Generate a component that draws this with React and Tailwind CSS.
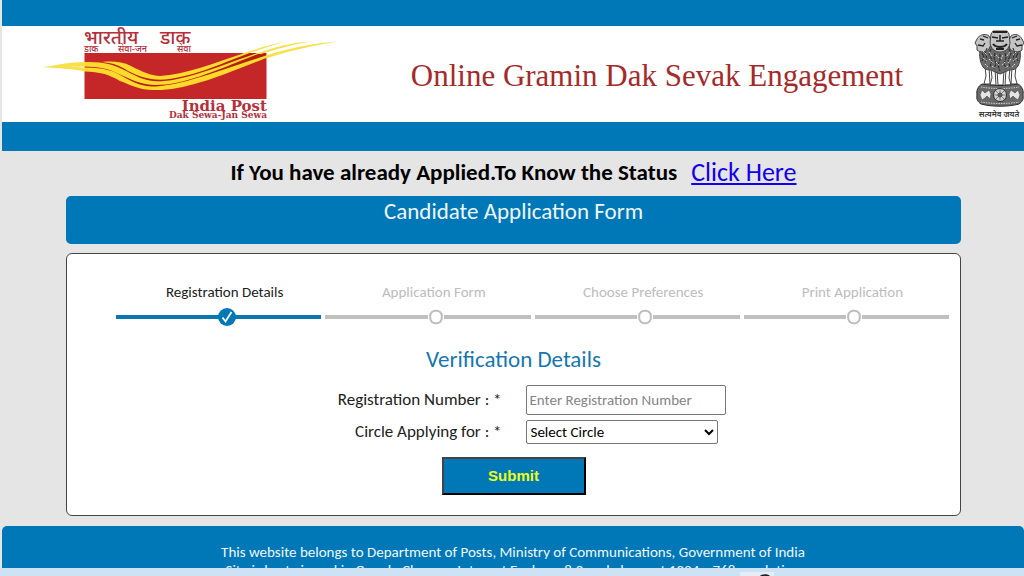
import React from "react";

const steps = [
  { label: "Registration Details", active: true },
  { label: "Application Form", active: false },
  { label: "Choose Preferences", active: false },
  { label: "Print Application", active: false },
];

function PostLogo() {
  return (
    <svg
      viewBox="40 26 300 96"
      className="h-24 w-[300px] shrink-0"
      role="img"
      aria-label="India Post"
    >
      <rect x="84.5" y="53" width="182" height="46" fill="#c52729" />
      <path
        d="M117 63C134 66 140 76 160 78C190 79 220 62 250 53H266V57C240 66 215 78 185 83C168 87 150 89 137 84C122 77 112 66 85 66V65Z"
        fill="#b3200f"
      />
      <g fill="#ffd92b">
        <path d="M102 62C112 61 122 61.500 131 66C143 72 150 75.500 160 76C185 75 214 63 247 52.300V54C220 64 190 78.500 160 79.800C148 79.500 138 76 128 71C120 65.500 112 63 102 62Z" />
        <path d="M84.500 62C104 61.500 113 64.500 122 69C134 74.500 142 80.500 156 81.300C182 81.500 210 69.500 258 52.800H261C214 71.500 184 85 156 85C141 84.500 132 80 121 75C108 68 98 67 84.500 66.500Z" />
        <path d="M84.500 67.500C104 67.500 114 71 122 76C136 84 142 86.500 156 86.500C184 84.500 214 72.500 266 55.500V58C218 77 186 90 156 90C140 90.500 132 85.500 120 81C108 74 100 72 84.500 71.500Z" />
      </g>
      <g fill="#f8e04a">
        <path d="M43 67C58 65 70 62 85 62V66.500C78 67 72 66.500 67 67C72 67 78 67 85 67.500V71.500C72 68.500 58 68.500 43 67Z" />
        <path d="M242 54C256 49 268 45 284 42C270 46 258 50 247 54Z" />
        <path d="M256 54C272 48 288 43 312 41C292 45 276 49 261 54Z" />
        <path d="M266 55.500C290 48 310 44 338 41.300C312 46 292 50 266 58.500Z" />
      </g>
      <g fill="#b5303a" fontWeight="500" fontFamily="'Noto Sans Devanagari','Noto Sans','Lohit Devanagari',sans-serif">
        <text fontSize="19">
          <tspan x="84" y="44">भारतीय </tspan>
          <tspan x="160" y="44">डाक</tspan>
        </text>
        <text fontSize="9">
          <tspan x="84" y="52">डाक </tspan>
          <tspan x="118" y="52">सेवा-जन </tspan>
          <tspan x="177" y="52">सेवा</tspan>
        </text>
      </g>
      <g fill="#b5303a" fontWeight="700" textAnchor="end" fontFamily="'DejaVu Serif',serif">
        <text x="267" y="111" fontSize="15">India Post</text>
        <text x="267" y="118" fontSize="9">Dak Sewa-Jan Sewa</text>
      </g>
    </svg>
  );
}

function Emblem() {
  return (
    <svg
      viewBox="0 0 50 92"
      className="h-[92px] w-[50px] shrink-0"
      role="img"
      aria-label="State Emblem of India"
    >
      <g fill="#fff" stroke="#444" strokeWidth="1">
        <path d="M11 38L12 48L10 56H16L15 39Z" />
        <path d="M17 40L18 50L16 57H22L21 41Z" />
        <path d="M23 42L24 57H29L30 42Z" />
        <path d="M32 41L31 57H37L35 50L36 40Z" />
        <path d="M38 39L37 56H43L41 48L42 38Z" />
      </g>
      <path d="M7 17C5 24 5 33 9 39C12 43 16 41 19 43L26 46L33 43C37 41 41 43 44 38C47 32 47 24 45 17Z" fill="#6a6a6a" stroke="#444" />
      <g fill="#c4c4c4" stroke="#444" strokeWidth="1">
        <path d="M15 8C11 5 5 7 3 11L1 15L3 18L3 22C7 25 12 24 15 21L18 14Z" />
        <path d="M37 8C41 5 46 7 48 11L50 15L48 18L48 22C44 25 39 24 36 21L34 14Z" />
        <path d="M17 6L19 3H33L35 6L36 15C35 21 31 24 26 24C21 24 17 21 16 15Z" />
      </g>
      <g fill="none" stroke="#222">
        <path d="M19 4H33" strokeWidth="2" />
        <path d="M18 9L24 10M34 9L28 10M26 7V13M22 13H30" strokeWidth="1.500" />
        <path d="M19 16C22 20 30 20 33 16M22 21H30" strokeWidth="2" />
        <path d="M6 11L10 12M4 17L9 18L11 15M9 8L14 10M46 11L42 12M48 17L43 18L41 15M43 8L38 10" strokeWidth="1.300" />
        <path d="M13 20L11 25L13 30L11 35M17 21L15 26L18 32L16 39M21 25L20 30L22 35L20 41M26 26V32L24 37L26 43M31 25L32 30L30 35L32 41M35 21L37 26L34 32L36 39M39 20L41 25L39 30L41 35" strokeDasharray="3 1" />
        <path d="M8 25L10 29L8 33M44 25L42 29L44 33" />
      </g>
      <g fill="none" stroke="#e2e2e2" strokeWidth="0.900" strokeDasharray="2 1">
        <path d="M9 23L13 27M15 24L18 28M22 27L25 30M29 27L27 31M36 24L33 28M42 24L39 27M9 30L13 33M15 31L19 35M22 34L25 37M31 34L28 37M37 31L34 35M43 30L39 33M11 36L14 39M18 38L21 40M34 38L31 40M41 36L38 39" />
      </g>
      <path d="M8 56C20 58 32 58 44 56C48 58 50 63 49 67C50 71 48 74 45 76C34 79 18 79 7 76C4 74 2 71 3 67C2 63 4 58 8 56Z" fill="#696969" stroke="#2d2d2d" />
      <path d="M7 59C18 61 34 61 45 59M7 74C18 76 34 76 45 74" fill="none" stroke="#ccc" strokeDasharray="1.500 1" />
      <circle cx="26" cy="67" r="6.500" fill="#d4d4d4" stroke="#2d2d2d" />
      <circle cx="26" cy="67" r="2" fill="#999" stroke="#333" />
      <path d="M26 61.500V72.500M20.500 67H31.500M22 63L30 71M22 71L30 63" stroke="#555" strokeWidth="0.700" />
      <path d="M8 62L11 65L15 62L17 66L16 71L13 68L11 70L8 72L6 67ZM44 62L41 65L37 62L35 66L36 71L39 68L41 70L44 72L46 67Z" fill="#e6e6e6" stroke="#444" strokeWidth="0.600" />
      <text x="25" y="89" textAnchor="middle" fontSize="8" fontWeight="600" fill="#333" fontFamily="'Noto Sans Devanagari','Noto Sans','Lohit Devanagari',sans-serif">
        सत्यमेव जयते
      </text>
    </svg>
  );
}

function Step({ label, active }) {
  return (
    <li className="flex flex-col">
      <span className={`pl-3 text-center text-[15px] leading-5 ${active ? "text-[#222]" : "text-[#bdbdbd]"}`}>
        {label}
      </span>
      <span className="mt-[5px] grid h-5 items-center justify-items-center">
        <span className={`col-start-1 row-start-1 h-1 w-full ${active ? "bg-[#0a77b3]" : "bg-[#c0c0c0]"}`} />
        <span className="col-start-1 row-start-1 flex pl-4">
          {active ? (
            <svg viewBox="0 0 18 18" className="size-[18px]" aria-hidden="true">
              <circle cx="9" cy="9" r="9" fill="#0077b6" />
              <path d="M4.500 9.500L7.500 13.500L13.500 4" fill="none" stroke="#fff" strokeWidth="1.800" />
            </svg>
          ) : (
            <svg viewBox="0 0 16 16" className="size-4" aria-hidden="true">
              <rect width="16" height="16" fill="#fff" />
              <rect x="2.200" y="1.700" width="11.600" height="12.600" rx="5.200" fill="#fff" stroke="#bdbdbd" strokeWidth="2" />
            </svg>
          )}
        </span>
      </span>
    </li>
  );
}

export default function App() {
  return (
    <div className="flex h-screen flex-col overflow-hidden bg-[#e5e5e5] font-['Carlito','Lato',sans-serif] text-black">
      <div className="flex min-h-0 flex-1 flex-col overflow-hidden pl-0.5">
        <header className="shrink-0">
          <div className="h-[26px] bg-[#0077b6]" />
          <div className="flex h-24 items-center justify-between bg-white pl-[38px]">
            <PostLogo />
            <h1 className="pt-1 font-['Liberation_Serif',serif] text-[31px] leading-8 text-[#a52a2a]">
              Online Gramin Dak Sevak Engagement
            </h1>
            <Emblem />
          </div>
          <div className="h-[29px] bg-[#0077b6]" />
        </header>

        <main className="shrink-0 pr-[63px] pb-2.5 pl-16">
          <p className="flex h-[45px] items-center justify-center gap-3.5 pb-1">
            <span className="text-[23px] leading-8 font-bold">If You have already Applied.To Know the Status</span>
            <a href="#status" className="text-[26px] leading-8 text-[#1200ee] underline">Click Here</a>
          </p>
          <h2 className="h-12 rounded-[5px] bg-[#0077b6] text-center text-[23px] leading-[30px] text-[#eef8ff]">
            Candidate Application Form
          </h2>

          <section className="mt-[9px] rounded-md border border-[#444] bg-white pt-7 pb-5">
            <ol className="grid grid-cols-4 gap-1 pr-[11px] pl-[49px]">
              {steps.map((s) => (
                <Step key={s.label} {...s} />
              ))}
            </ol>

            <form onSubmit={(e) => e.preventDefault()}>
              <h3 className="mt-4 text-center text-[23px] leading-8 text-[#1577b0]">Verification Details</h3>
              <div className="mt-2.5 grid grid-cols-2 items-center gap-x-6 gap-y-[5px]">
                <label htmlFor="regno" className="text-right text-[17px] leading-6 text-[#222]">
                  Registration Number : *
                </label>
                <input
                  id="regno"
                  type="text"
                  placeholder="Enter Registration Number"
                  className="h-[30px] w-[200px] rounded-[2px] border border-[#777] bg-white px-[3px] text-[15px] placeholder:text-[#858585]"
                />
                <label htmlFor="circle" className="text-right text-[17px] leading-6 text-[#222]">
                  Circle Applying for : *
                </label>
                <select id="circle" className="h-6 w-48 rounded-[2px] border border-[#777] bg-white text-[15px] text-black">
                  <option>Select Circle</option>
                </select>
              </div>
              <button
                type="submit"
                className="mx-auto mt-[13px] block h-[38px] w-36 border-2 border-t-[#444] border-r-black border-b-black border-l-[#444] bg-[#0077b6] font-['Liberation_Sans',sans-serif] text-[15px] font-bold text-[#eaff1a]"
              >
                Submit
              </button>
            </form>
          </section>
        </main>

        <footer className="min-h-0 flex-1 overflow-hidden rounded-t-[5px] bg-[#0077b6] pt-[17px] text-center text-[15px] leading-[18px] text-[#eef8ff]">
          <p>This website belongs to Department of Posts, Ministry of Communications, Government of India</p>
          <p>Site is best viewed in Google Chrome, Internet Explorer 8.0 and above at 1024 x 768 resolution</p>
        </footer>
      </div>
      <div className="flex h-2 shrink-0 justify-end overflow-hidden bg-[#cde3f5] pr-[250px]">
        <svg viewBox="0 0 34 4" className="mt-1 h-1 w-[34px]" aria-hidden="true">
          <rect width="34" height="4" rx="1" fill="#e4eef6" />
          <path d="M20 4C22 1.500 28 1.500 30 4Z" fill="#222" />
        </svg>
      </div>
    </div>
  );
}
